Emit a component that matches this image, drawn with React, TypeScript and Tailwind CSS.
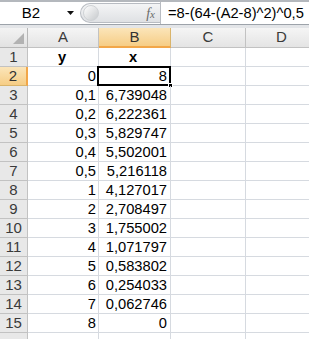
const rows: [string, string][] = [
  ['0', '8'],
  ['0,1', '6,739048'],
  ['0,2', '6,222361'],
  ['0,3', '5,829747'],
  ['0,4', '5,502001'],
  ['0,5', '5,216118'],
  ['1', '4,127017'],
  ['2', '2,708497'],
  ['3', '1,755002'],
  ['4', '1,071797'],
  ['5', '0,583802'],
  ['6', '0,254033'],
  ['7', '0,062746'],
  ['8', '0'],
];

const font = { fontFamily: '"Liberation Sans", Arial, sans-serif' };

function FormulaBar() {
  return (
    <div className="flex flex-col">
      <div className="h-[2px] bg-[#b4b8bd]" />
      <div className="flex h-[23px] items-stretch border-b border-[#9da3aa] bg-white">
        <div className="flex w-[78px] items-center">
          <span className="w-[62px] text-center text-[15px] text-black">B2</span>
          <svg width="8" height="5" viewBox="0 0 8 5" className="ml-[5px]">
            <path d="M0 0h7L3.5 4z" fill="#111" />
          </svg>
        </div>
        <div className="my-[1px] ml-[2px] flex w-[80px] items-center rounded-l-full border border-r-0 border-[#b8bcc2] bg-gradient-to-b from-[#f4f5f6] to-[#dfe1e4]">
          <div className="ml-[2px] h-[16px] w-[16px] rounded-full border border-[#cfd2d5] bg-gradient-to-br from-[#ffffff] to-[#c7cacd]" />
          <span
            className="ml-auto mr-[5px] text-[14px] text-[#6a6a6a] italic"
            style={{ fontFamily: '"Liberation Serif", serif' }}
          >
            f<span className="text-[11px]">x</span>
          </span>
        </div>
        <div className="flex flex-1 items-center border-l border-[#b8bcc2] pl-[7px] text-[14.7px] text-black whitespace-nowrap">
          =8-(64-(A2-8)^2)^0,5
        </div>
      </div>
      <div className="h-[3px] bg-[#e3e5e8]" />
    </div>
  );
}

const cols = ['A', 'B', 'C', 'D'];
const widths = ['w-[71px]', 'w-[72px]', 'w-[75px]', 'w-[72px]'];

function HeaderRow() {
  return (
    <div className="flex h-[20px]">
      <div className="relative w-[28px] shrink-0 border-r border-b border-[#b7b7b7] bg-gradient-to-b from-[#f3f3f3] to-[#e2e2e2]">
        <svg width="11" height="11" viewBox="0 0 11 11" className="absolute right-[3px] bottom-[3px]">
          <path d="M11 0V11H0z" fill="#b2b2b2" />
        </svg>
      </div>
      {cols.map((c, i) => (
        <div
          key={c}
          className={`${widths[i]} shrink-0 flex items-center justify-center border-r text-[15px] ${
            c === 'B'
              ? 'border-b-2 border-r-[#d9b46b] border-b-[#f2a648] bg-gradient-to-b from-[#fbe5b9] to-[#f6cd85] text-[#333]'
              : 'border-b border-[#c2c2c2] bg-gradient-to-b from-[#f5f5f5] to-[#e4e4e4] text-[#3a3a3a]'
          }`}
        >
          {c}
        </div>
      ))}
    </div>
  );
}

function Row({ n, a, b, bold }: { n?: number; a: string; b: string; bold?: boolean }) {
  const sel = n === 2;
  return (
    <div className="flex h-[19px]">
      <div
        className={`w-[28px] shrink-0 flex items-center justify-center border-b text-[15px] ${
          sel
            ? 'border-r-2 border-r-[#f2a648] border-b-[#d9b46b] bg-gradient-to-b from-[#fbe5b9] to-[#f6cd85] text-[#333]'
            : 'border-r border-[#c2c2c2] bg-[#e8e8e8] text-[#3a3a3a]'
        }`}
      >
        {n}
      </div>
      <div
        className={`w-[71px] shrink-0 flex items-center border-r border-b border-[#d6dae0] pr-[2px] text-[14.7px] text-black ${
          bold ? 'justify-center font-bold' : 'justify-end'
        }`}
      >
        {a}
      </div>
      <div
        className={`relative w-[72px] shrink-0 flex items-center border-r border-b border-[#d6dae0] pr-[3px] text-[14.7px] text-black ${
          bold ? 'justify-center font-bold' : 'justify-end'
        }`}
      >
        {b}
        {sel && (
          <>
            <div className="absolute -left-[2px] -top-[1px] right-[-1px] bottom-[-1px] border-2 border-black" />
            <div className="absolute -right-[3px] -bottom-[3px] h-[5px] w-[5px] border border-white bg-black" />
          </>
        )}
      </div>
      <div className="w-[75px] shrink-0 border-r border-b border-[#d6dae0]" />
      <div className="w-[72px] shrink-0 border-r border-b border-[#d6dae0]" />
    </div>
  );
}

export default function App() {
  return (
    <div className="h-[339px] w-[309px] overflow-hidden bg-white" style={font}>
      <FormulaBar />
      <HeaderRow />
      <Row n={1} a="y" b="x" bold />
      {rows.map((r, i) => (
        <Row key={i} n={i + 2} a={r[0]} b={r[1]} />
      ))}
      {/* row 16 is cut by the window edge, only its top shows */}
      <Row a="" b="" />
    </div>
  );
}
